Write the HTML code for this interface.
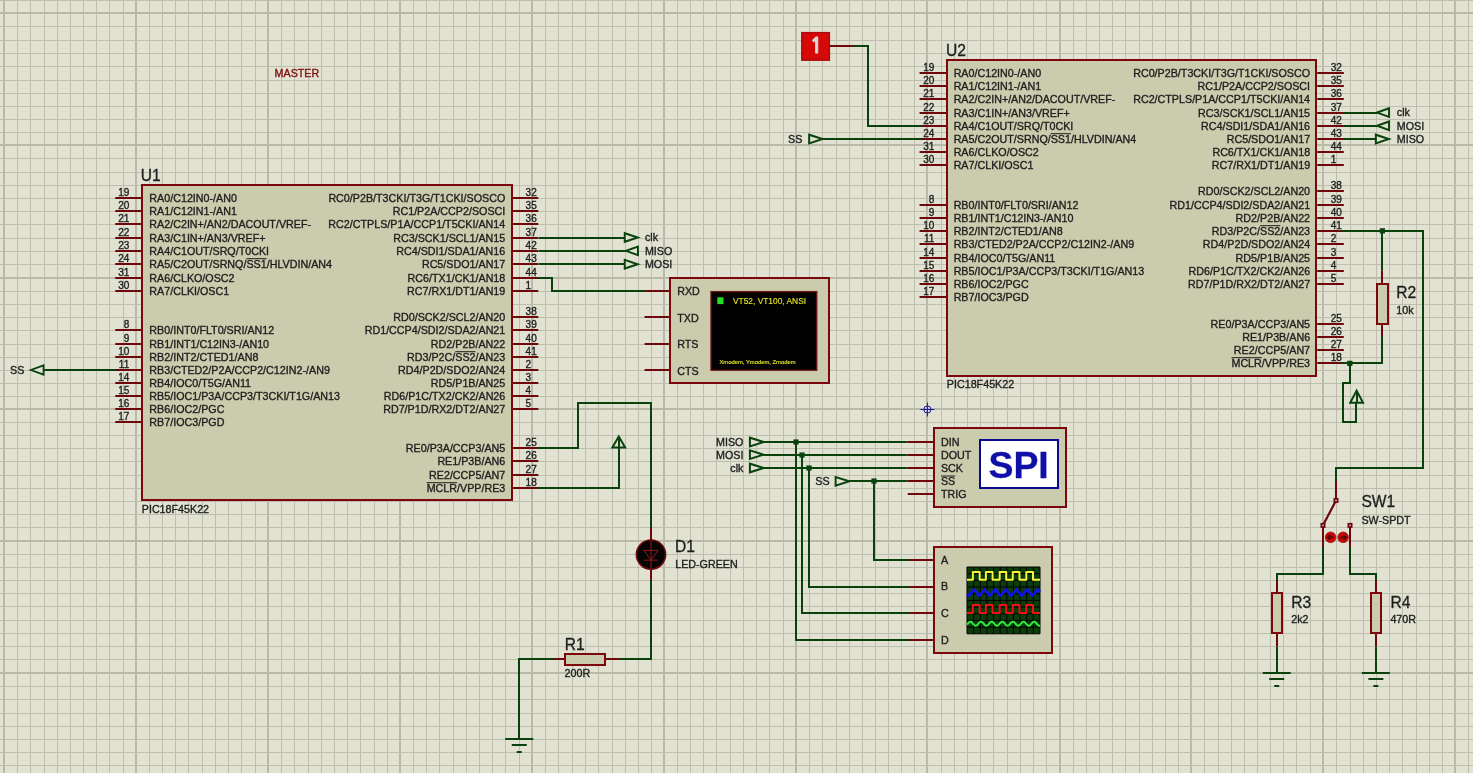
<!DOCTYPE html>
<html><head><meta charset="utf-8"><title>SPI Master/Slave schematic</title>
<style>html,body{margin:0;padding:0;background:#e1e2d2;overflow:hidden}svg{display:block;will-change:transform;opacity:0.999}text{white-space:pre}</style>
</head><body>
<svg width="1473" height="773" viewBox="0 0 1473 773" font-family='"Liberation Sans", Arial, sans-serif'><rect x="0" y="0" width="1473" height="773" fill="#e1e2d2"/>
<g shape-rendering="crispEdges"><rect x="3" y="0" width="2" height="773" fill="#b8b9a8"/><rect x="17" y="0" width="1" height="773" fill="#bdbead"/><rect x="30" y="0" width="1" height="773" fill="#bdbead"/><rect x="44" y="0" width="1" height="773" fill="#bdbead"/><rect x="57" y="0" width="1" height="773" fill="#bdbead"/><rect x="70" y="0" width="1" height="773" fill="#bdbead"/><rect x="83" y="0" width="1" height="773" fill="#bdbead"/><rect x="96" y="0" width="1" height="773" fill="#bdbead"/><rect x="109" y="0" width="1" height="773" fill="#bdbead"/><rect x="123" y="0" width="1" height="773" fill="#bdbead"/><rect x="135" y="0" width="2" height="773" fill="#b8b9a8"/><rect x="149" y="0" width="1" height="773" fill="#bdbead"/><rect x="162" y="0" width="1" height="773" fill="#bdbead"/><rect x="175" y="0" width="1" height="773" fill="#bdbead"/><rect x="188" y="0" width="1" height="773" fill="#bdbead"/><rect x="202" y="0" width="1" height="773" fill="#bdbead"/><rect x="215" y="0" width="1" height="773" fill="#bdbead"/><rect x="228" y="0" width="1" height="773" fill="#bdbead"/><rect x="241" y="0" width="1" height="773" fill="#bdbead"/><rect x="255" y="0" width="1" height="773" fill="#bdbead"/><rect x="267" y="0" width="2" height="773" fill="#b8b9a8"/><rect x="281" y="0" width="1" height="773" fill="#bdbead"/><rect x="294" y="0" width="1" height="773" fill="#bdbead"/><rect x="308" y="0" width="1" height="773" fill="#bdbead"/><rect x="321" y="0" width="1" height="773" fill="#bdbead"/><rect x="334" y="0" width="1" height="773" fill="#bdbead"/><rect x="347" y="0" width="1" height="773" fill="#bdbead"/><rect x="360" y="0" width="1" height="773" fill="#bdbead"/><rect x="374" y="0" width="1" height="773" fill="#bdbead"/><rect x="387" y="0" width="1" height="773" fill="#bdbead"/><rect x="399" y="0" width="2" height="773" fill="#b8b9a8"/><rect x="413" y="0" width="1" height="773" fill="#bdbead"/><rect x="426" y="0" width="1" height="773" fill="#bdbead"/><rect x="439" y="0" width="1" height="773" fill="#bdbead"/><rect x="453" y="0" width="1" height="773" fill="#bdbead"/><rect x="466" y="0" width="1" height="773" fill="#bdbead"/><rect x="479" y="0" width="1" height="773" fill="#bdbead"/><rect x="492" y="0" width="1" height="773" fill="#bdbead"/><rect x="505" y="0" width="1" height="773" fill="#bdbead"/><rect x="519" y="0" width="1" height="773" fill="#bdbead"/><rect x="531" y="0" width="2" height="773" fill="#b8b9a8"/><rect x="545" y="0" width="1" height="773" fill="#bdbead"/><rect x="558" y="0" width="1" height="773" fill="#bdbead"/><rect x="572" y="0" width="1" height="773" fill="#bdbead"/><rect x="585" y="0" width="1" height="773" fill="#bdbead"/><rect x="598" y="0" width="1" height="773" fill="#bdbead"/><rect x="612" y="0" width="1" height="773" fill="#bdbead"/><rect x="625" y="0" width="1" height="773" fill="#bdbead"/><rect x="638" y="0" width="1" height="773" fill="#bdbead"/><rect x="651" y="0" width="1" height="773" fill="#bdbead"/><rect x="663" y="0" width="2" height="773" fill="#b8b9a8"/><rect x="677" y="0" width="1" height="773" fill="#bdbead"/><rect x="690" y="0" width="1" height="773" fill="#bdbead"/><rect x="703" y="0" width="1" height="773" fill="#bdbead"/><rect x="716" y="0" width="1" height="773" fill="#bdbead"/><rect x="730" y="0" width="1" height="773" fill="#bdbead"/><rect x="743" y="0" width="1" height="773" fill="#bdbead"/><rect x="756" y="0" width="1" height="773" fill="#bdbead"/><rect x="769" y="0" width="1" height="773" fill="#bdbead"/><rect x="783" y="0" width="1" height="773" fill="#bdbead"/><rect x="795" y="0" width="2" height="773" fill="#b8b9a8"/><rect x="809" y="0" width="1" height="773" fill="#bdbead"/><rect x="822" y="0" width="1" height="773" fill="#bdbead"/><rect x="836" y="0" width="1" height="773" fill="#bdbead"/><rect x="849" y="0" width="1" height="773" fill="#bdbead"/><rect x="862" y="0" width="1" height="773" fill="#bdbead"/><rect x="875" y="0" width="1" height="773" fill="#bdbead"/><rect x="888" y="0" width="1" height="773" fill="#bdbead"/><rect x="901" y="0" width="1" height="773" fill="#bdbead"/><rect x="914" y="0" width="1" height="773" fill="#bdbead"/><rect x="926" y="0" width="2" height="773" fill="#b8b9a8"/><rect x="941" y="0" width="1" height="773" fill="#bdbead"/><rect x="954" y="0" width="1" height="773" fill="#bdbead"/><rect x="967" y="0" width="1" height="773" fill="#bdbead"/><rect x="980" y="0" width="1" height="773" fill="#bdbead"/><rect x="993" y="0" width="1" height="773" fill="#bdbead"/><rect x="1007" y="0" width="1" height="773" fill="#bdbead"/><rect x="1020" y="0" width="1" height="773" fill="#bdbead"/><rect x="1033" y="0" width="1" height="773" fill="#bdbead"/><rect x="1046" y="0" width="1" height="773" fill="#bdbead"/><rect x="1059" y="0" width="2" height="773" fill="#b8b9a8"/><rect x="1073" y="0" width="1" height="773" fill="#bdbead"/><rect x="1086" y="0" width="1" height="773" fill="#bdbead"/><rect x="1099" y="0" width="1" height="773" fill="#bdbead"/><rect x="1112" y="0" width="1" height="773" fill="#bdbead"/><rect x="1125" y="0" width="1" height="773" fill="#bdbead"/><rect x="1139" y="0" width="1" height="773" fill="#bdbead"/><rect x="1152" y="0" width="1" height="773" fill="#bdbead"/><rect x="1165" y="0" width="1" height="773" fill="#bdbead"/><rect x="1178" y="0" width="1" height="773" fill="#bdbead"/><rect x="1190" y="0" width="2" height="773" fill="#b8b9a8"/><rect x="1204" y="0" width="1" height="773" fill="#bdbead"/><rect x="1218" y="0" width="1" height="773" fill="#bdbead"/><rect x="1231" y="0" width="1" height="773" fill="#bdbead"/><rect x="1244" y="0" width="1" height="773" fill="#bdbead"/><rect x="1257" y="0" width="1" height="773" fill="#bdbead"/><rect x="1270" y="0" width="1" height="773" fill="#bdbead"/><rect x="1283" y="0" width="1" height="773" fill="#bdbead"/><rect x="1296" y="0" width="1" height="773" fill="#bdbead"/><rect x="1310" y="0" width="1" height="773" fill="#bdbead"/><rect x="1322" y="0" width="2" height="773" fill="#b8b9a8"/><rect x="1336" y="0" width="1" height="773" fill="#bdbead"/><rect x="1350" y="0" width="1" height="773" fill="#bdbead"/><rect x="1363" y="0" width="1" height="773" fill="#bdbead"/><rect x="1376" y="0" width="1" height="773" fill="#bdbead"/><rect x="1389" y="0" width="1" height="773" fill="#bdbead"/><rect x="1402" y="0" width="1" height="773" fill="#bdbead"/><rect x="1416" y="0" width="1" height="773" fill="#bdbead"/><rect x="1429" y="0" width="1" height="773" fill="#bdbead"/><rect x="1442" y="0" width="1" height="773" fill="#bdbead"/><rect x="1454" y="0" width="2" height="773" fill="#b8b9a8"/><rect x="1468" y="0" width="1" height="773" fill="#bdbead"/><rect x="0" y="0" width="1473" height="1" fill="#bdbead"/><rect x="0" y="12" width="1473" height="2" fill="#b8b9a8"/><rect x="0" y="26" width="1473" height="1" fill="#bdbead"/><rect x="0" y="40" width="1473" height="1" fill="#bdbead"/><rect x="0" y="53" width="1473" height="1" fill="#bdbead"/><rect x="0" y="66" width="1473" height="1" fill="#bdbead"/><rect x="0" y="80" width="1473" height="1" fill="#bdbead"/><rect x="0" y="93" width="1473" height="1" fill="#bdbead"/><rect x="0" y="106" width="1473" height="1" fill="#bdbead"/><rect x="0" y="119" width="1473" height="1" fill="#bdbead"/><rect x="0" y="132" width="1473" height="1" fill="#bdbead"/><rect x="0" y="144" width="1473" height="2" fill="#b8b9a8"/><rect x="0" y="158" width="1473" height="1" fill="#bdbead"/><rect x="0" y="172" width="1473" height="1" fill="#bdbead"/><rect x="0" y="185" width="1473" height="1" fill="#bdbead"/><rect x="0" y="198" width="1473" height="1" fill="#bdbead"/><rect x="0" y="211" width="1473" height="1" fill="#bdbead"/><rect x="0" y="224" width="1473" height="1" fill="#bdbead"/><rect x="0" y="238" width="1473" height="1" fill="#bdbead"/><rect x="0" y="251" width="1473" height="1" fill="#bdbead"/><rect x="0" y="264" width="1473" height="1" fill="#bdbead"/><rect x="0" y="277" width="1473" height="2" fill="#b8b9a8"/><rect x="0" y="291" width="1473" height="1" fill="#bdbead"/><rect x="0" y="304" width="1473" height="1" fill="#bdbead"/><rect x="0" y="317" width="1473" height="1" fill="#bdbead"/><rect x="0" y="330" width="1473" height="1" fill="#bdbead"/><rect x="0" y="344" width="1473" height="1" fill="#bdbead"/><rect x="0" y="357" width="1473" height="1" fill="#bdbead"/><rect x="0" y="370" width="1473" height="1" fill="#bdbead"/><rect x="0" y="383" width="1473" height="1" fill="#bdbead"/><rect x="0" y="396" width="1473" height="1" fill="#bdbead"/><rect x="0" y="408" width="1473" height="2" fill="#b8b9a8"/><rect x="0" y="422" width="1473" height="1" fill="#bdbead"/><rect x="0" y="435" width="1473" height="1" fill="#bdbead"/><rect x="0" y="448" width="1473" height="1" fill="#bdbead"/><rect x="0" y="461" width="1473" height="1" fill="#bdbead"/><rect x="0" y="475" width="1473" height="1" fill="#bdbead"/><rect x="0" y="488" width="1473" height="1" fill="#bdbead"/><rect x="0" y="501" width="1473" height="1" fill="#bdbead"/><rect x="0" y="514" width="1473" height="1" fill="#bdbead"/><rect x="0" y="527" width="1473" height="1" fill="#bdbead"/><rect x="0" y="540" width="1473" height="2" fill="#b8b9a8"/><rect x="0" y="554" width="1473" height="1" fill="#bdbead"/><rect x="0" y="567" width="1473" height="1" fill="#bdbead"/><rect x="0" y="580" width="1473" height="1" fill="#bdbead"/><rect x="0" y="593" width="1473" height="1" fill="#bdbead"/><rect x="0" y="606" width="1473" height="1" fill="#bdbead"/><rect x="0" y="620" width="1473" height="1" fill="#bdbead"/><rect x="0" y="633" width="1473" height="1" fill="#bdbead"/><rect x="0" y="646" width="1473" height="1" fill="#bdbead"/><rect x="0" y="659" width="1473" height="1" fill="#bdbead"/><rect x="0" y="672" width="1473" height="2" fill="#b8b9a8"/><rect x="0" y="686" width="1473" height="1" fill="#bdbead"/><rect x="0" y="699" width="1473" height="1" fill="#bdbead"/><rect x="0" y="713" width="1473" height="1" fill="#bdbead"/><rect x="0" y="726" width="1473" height="1" fill="#bdbead"/><rect x="0" y="739" width="1473" height="1" fill="#bdbead"/><rect x="0" y="752" width="1473" height="1" fill="#bdbead"/><rect x="0" y="765" width="1473" height="1" fill="#bdbead"/></g>
<rect x="142" y="185" width="370" height="315" fill="#cbcbae" stroke="#7c060c" stroke-width="2"/>
<text x="140.85" y="181" font-size="15.6" text-anchor="start" fill="#1e1e1e" stroke="#1e1e1e" stroke-width="0.3">U1</text>
<text x="141.75" y="512.54" font-size="10.72" text-anchor="start" fill="#1e1e1e" stroke="#1e1e1e" stroke-width="0.35">PIC18F45K22</text>
<line x1="115.25" y1="198" x2="141.05" y2="198" stroke="#6e060c" stroke-width="2" stroke-linecap="butt"/>
<text x="129.25" y="195.8" font-size="10.0" text-anchor="end" fill="#1e1e1e" stroke="#1e1e1e" stroke-width="0.35">19</text>
<text x="149.35" y="201.9" font-size="10.72" text-anchor="start" fill="#1e1e1e" stroke="#1e1e1e" stroke-width="0.35">RA0/C12IN0-/AN0</text>
<line x1="115.25" y1="211" x2="141.05" y2="211" stroke="#6e060c" stroke-width="2" stroke-linecap="butt"/>
<text x="129.25" y="208.8" font-size="10.0" text-anchor="end" fill="#1e1e1e" stroke="#1e1e1e" stroke-width="0.35">20</text>
<text x="149.35" y="214.9" font-size="10.72" text-anchor="start" fill="#1e1e1e" stroke="#1e1e1e" stroke-width="0.35">RA1/C12IN1-/AN1</text>
<line x1="115.25" y1="224" x2="141.05" y2="224" stroke="#6e060c" stroke-width="2" stroke-linecap="butt"/>
<text x="129.25" y="221.8" font-size="10.0" text-anchor="end" fill="#1e1e1e" stroke="#1e1e1e" stroke-width="0.35">21</text>
<text x="149.35" y="227.9" font-size="10.72" text-anchor="start" fill="#1e1e1e" stroke="#1e1e1e" stroke-width="0.35">RA2/C2IN+/AN2/DACOUT/VREF-</text>
<line x1="115.25" y1="238" x2="141.05" y2="238" stroke="#6e060c" stroke-width="2" stroke-linecap="butt"/>
<text x="129.25" y="235.8" font-size="10.0" text-anchor="end" fill="#1e1e1e" stroke="#1e1e1e" stroke-width="0.35">22</text>
<text x="149.35" y="241.9" font-size="10.72" text-anchor="start" fill="#1e1e1e" stroke="#1e1e1e" stroke-width="0.35">RA3/C1IN+/AN3/VREF+</text>
<line x1="115.25" y1="251" x2="141.05" y2="251" stroke="#6e060c" stroke-width="2" stroke-linecap="butt"/>
<text x="129.25" y="248.8" font-size="10.0" text-anchor="end" fill="#1e1e1e" stroke="#1e1e1e" stroke-width="0.35">23</text>
<text x="149.35" y="254.9" font-size="10.72" text-anchor="start" fill="#1e1e1e" stroke="#1e1e1e" stroke-width="0.35">RA4/C1OUT/SRQ/T0CKI</text>
<line x1="115.25" y1="264" x2="141.05" y2="264" stroke="#6e060c" stroke-width="2" stroke-linecap="butt"/>
<text x="129.25" y="261.8" font-size="10.0" text-anchor="end" fill="#1e1e1e" stroke="#1e1e1e" stroke-width="0.35">24</text>
<text x="149.35" y="267.9" font-size="10.72" text-anchor="start" fill="#1e1e1e" stroke="#1e1e1e" stroke-width="0.35">RA5/C2OUT/SRNQ/SS1/HLVDIN/AN4</text>
<line x1="115.25" y1="278" x2="141.05" y2="278" stroke="#6e060c" stroke-width="2" stroke-linecap="butt"/>
<text x="129.25" y="275.8" font-size="10.0" text-anchor="end" fill="#1e1e1e" stroke="#1e1e1e" stroke-width="0.35">31</text>
<text x="149.35" y="281.9" font-size="10.72" text-anchor="start" fill="#1e1e1e" stroke="#1e1e1e" stroke-width="0.35">RA6/CLKO/OSC2</text>
<line x1="115.25" y1="291" x2="141.05" y2="291" stroke="#6e060c" stroke-width="2" stroke-linecap="butt"/>
<text x="129.25" y="288.8" font-size="10.0" text-anchor="end" fill="#1e1e1e" stroke="#1e1e1e" stroke-width="0.35">30</text>
<text x="149.35" y="294.9" font-size="10.72" text-anchor="start" fill="#1e1e1e" stroke="#1e1e1e" stroke-width="0.35">RA7/CLKI/OSC1</text>
<line x1="115.25" y1="330" x2="141.05" y2="330" stroke="#6e060c" stroke-width="2" stroke-linecap="butt"/>
<text x="129.25" y="327.8" font-size="10.0" text-anchor="end" fill="#1e1e1e" stroke="#1e1e1e" stroke-width="0.35">8</text>
<text x="149.35" y="333.9" font-size="10.72" text-anchor="start" fill="#1e1e1e" stroke="#1e1e1e" stroke-width="0.35">RB0/INT0/FLT0/SRI/AN12</text>
<line x1="115.25" y1="344" x2="141.05" y2="344" stroke="#6e060c" stroke-width="2" stroke-linecap="butt"/>
<text x="129.25" y="341.8" font-size="10.0" text-anchor="end" fill="#1e1e1e" stroke="#1e1e1e" stroke-width="0.35">9</text>
<text x="149.35" y="347.9" font-size="10.72" text-anchor="start" fill="#1e1e1e" stroke="#1e1e1e" stroke-width="0.35">RB1/INT1/C12IN3-/AN10</text>
<line x1="115.25" y1="357" x2="141.05" y2="357" stroke="#6e060c" stroke-width="2" stroke-linecap="butt"/>
<text x="129.25" y="354.8" font-size="10.0" text-anchor="end" fill="#1e1e1e" stroke="#1e1e1e" stroke-width="0.35">10</text>
<text x="149.35" y="360.9" font-size="10.72" text-anchor="start" fill="#1e1e1e" stroke="#1e1e1e" stroke-width="0.35">RB2/INT2/CTED1/AN8</text>
<line x1="115.25" y1="370" x2="141.05" y2="370" stroke="#6e060c" stroke-width="2" stroke-linecap="butt"/>
<text x="129.25" y="367.8" font-size="10.0" text-anchor="end" fill="#1e1e1e" stroke="#1e1e1e" stroke-width="0.35">11</text>
<text x="149.35" y="373.9" font-size="10.72" text-anchor="start" fill="#1e1e1e" stroke="#1e1e1e" stroke-width="0.35">RB3/CTED2/P2A/CCP2/C12IN2-/AN9</text>
<line x1="115.25" y1="383" x2="141.05" y2="383" stroke="#6e060c" stroke-width="2" stroke-linecap="butt"/>
<text x="129.25" y="380.8" font-size="10.0" text-anchor="end" fill="#1e1e1e" stroke="#1e1e1e" stroke-width="0.35">14</text>
<text x="149.35" y="386.9" font-size="10.72" text-anchor="start" fill="#1e1e1e" stroke="#1e1e1e" stroke-width="0.35">RB4/IOC0/T5G/AN11</text>
<line x1="115.25" y1="396" x2="141.05" y2="396" stroke="#6e060c" stroke-width="2" stroke-linecap="butt"/>
<text x="129.25" y="393.8" font-size="10.0" text-anchor="end" fill="#1e1e1e" stroke="#1e1e1e" stroke-width="0.35">15</text>
<text x="149.35" y="399.9" font-size="10.72" text-anchor="start" fill="#1e1e1e" stroke="#1e1e1e" stroke-width="0.35">RB5/IOC1/P3A/CCP3/T3CKI/T1G/AN13</text>
<line x1="115.25" y1="409" x2="141.05" y2="409" stroke="#6e060c" stroke-width="2" stroke-linecap="butt"/>
<text x="129.25" y="406.8" font-size="10.0" text-anchor="end" fill="#1e1e1e" stroke="#1e1e1e" stroke-width="0.35">16</text>
<text x="149.35" y="412.9" font-size="10.72" text-anchor="start" fill="#1e1e1e" stroke="#1e1e1e" stroke-width="0.35">RB6/IOC2/PGC</text>
<line x1="115.25" y1="422" x2="141.05" y2="422" stroke="#6e060c" stroke-width="2" stroke-linecap="butt"/>
<text x="129.25" y="419.8" font-size="10.0" text-anchor="end" fill="#1e1e1e" stroke="#1e1e1e" stroke-width="0.35">17</text>
<text x="149.35" y="425.9" font-size="10.72" text-anchor="start" fill="#1e1e1e" stroke="#1e1e1e" stroke-width="0.35">RB7/IOC3/PGD</text>
<line x1="513.01" y1="198" x2="538.31" y2="198" stroke="#6e060c" stroke-width="2" stroke-linecap="butt"/>
<text x="525.61" y="195.8" font-size="10.0" text-anchor="start" fill="#1e1e1e" stroke="#1e1e1e" stroke-width="0.35">32</text>
<text x="505.31" y="201.9" font-size="10.72" text-anchor="end" fill="#1e1e1e" stroke="#1e1e1e" stroke-width="0.35">RC0/P2B/T3CKI/T3G/T1CKI/SOSCO</text>
<line x1="513.01" y1="211" x2="538.31" y2="211" stroke="#6e060c" stroke-width="2" stroke-linecap="butt"/>
<text x="525.61" y="208.8" font-size="10.0" text-anchor="start" fill="#1e1e1e" stroke="#1e1e1e" stroke-width="0.35">35</text>
<text x="505.31" y="214.9" font-size="10.72" text-anchor="end" fill="#1e1e1e" stroke="#1e1e1e" stroke-width="0.35">RC1/P2A/CCP2/SOSCI</text>
<line x1="513.01" y1="224" x2="538.31" y2="224" stroke="#6e060c" stroke-width="2" stroke-linecap="butt"/>
<text x="525.61" y="221.8" font-size="10.0" text-anchor="start" fill="#1e1e1e" stroke="#1e1e1e" stroke-width="0.35">36</text>
<text x="505.31" y="227.9" font-size="10.72" text-anchor="end" fill="#1e1e1e" stroke="#1e1e1e" stroke-width="0.35">RC2/CTPLS/P1A/CCP1/T5CKI/AN14</text>
<line x1="513.01" y1="238" x2="538.31" y2="238" stroke="#6e060c" stroke-width="2" stroke-linecap="butt"/>
<text x="525.61" y="235.8" font-size="10.0" text-anchor="start" fill="#1e1e1e" stroke="#1e1e1e" stroke-width="0.35">37</text>
<text x="505.31" y="241.9" font-size="10.72" text-anchor="end" fill="#1e1e1e" stroke="#1e1e1e" stroke-width="0.35">RC3/SCK1/SCL1/AN15</text>
<line x1="513.01" y1="251" x2="538.31" y2="251" stroke="#6e060c" stroke-width="2" stroke-linecap="butt"/>
<text x="525.61" y="248.8" font-size="10.0" text-anchor="start" fill="#1e1e1e" stroke="#1e1e1e" stroke-width="0.35">42</text>
<text x="505.31" y="254.9" font-size="10.72" text-anchor="end" fill="#1e1e1e" stroke="#1e1e1e" stroke-width="0.35">RC4/SDI1/SDA1/AN16</text>
<line x1="513.01" y1="264" x2="538.31" y2="264" stroke="#6e060c" stroke-width="2" stroke-linecap="butt"/>
<text x="525.61" y="261.8" font-size="10.0" text-anchor="start" fill="#1e1e1e" stroke="#1e1e1e" stroke-width="0.35">43</text>
<text x="505.31" y="267.9" font-size="10.72" text-anchor="end" fill="#1e1e1e" stroke="#1e1e1e" stroke-width="0.35">RC5/SDO1/AN17</text>
<line x1="513.01" y1="278" x2="538.31" y2="278" stroke="#6e060c" stroke-width="2" stroke-linecap="butt"/>
<text x="525.61" y="275.8" font-size="10.0" text-anchor="start" fill="#1e1e1e" stroke="#1e1e1e" stroke-width="0.35">44</text>
<text x="505.31" y="281.9" font-size="10.72" text-anchor="end" fill="#1e1e1e" stroke="#1e1e1e" stroke-width="0.35">RC6/TX1/CK1/AN18</text>
<line x1="513.01" y1="291" x2="538.31" y2="291" stroke="#6e060c" stroke-width="2" stroke-linecap="butt"/>
<text x="525.61" y="288.8" font-size="10.0" text-anchor="start" fill="#1e1e1e" stroke="#1e1e1e" stroke-width="0.35">1</text>
<text x="505.31" y="294.9" font-size="10.72" text-anchor="end" fill="#1e1e1e" stroke="#1e1e1e" stroke-width="0.35">RC7/RX1/DT1/AN19</text>
<line x1="513.01" y1="317" x2="538.31" y2="317" stroke="#6e060c" stroke-width="2" stroke-linecap="butt"/>
<text x="525.61" y="314.8" font-size="10.0" text-anchor="start" fill="#1e1e1e" stroke="#1e1e1e" stroke-width="0.35">38</text>
<text x="505.31" y="320.9" font-size="10.72" text-anchor="end" fill="#1e1e1e" stroke="#1e1e1e" stroke-width="0.35">RD0/SCK2/SCL2/AN20</text>
<line x1="513.01" y1="330" x2="538.31" y2="330" stroke="#6e060c" stroke-width="2" stroke-linecap="butt"/>
<text x="525.61" y="327.8" font-size="10.0" text-anchor="start" fill="#1e1e1e" stroke="#1e1e1e" stroke-width="0.35">39</text>
<text x="505.31" y="333.9" font-size="10.72" text-anchor="end" fill="#1e1e1e" stroke="#1e1e1e" stroke-width="0.35">RD1/CCP4/SDI2/SDA2/AN21</text>
<line x1="513.01" y1="344" x2="538.31" y2="344" stroke="#6e060c" stroke-width="2" stroke-linecap="butt"/>
<text x="525.61" y="341.8" font-size="10.0" text-anchor="start" fill="#1e1e1e" stroke="#1e1e1e" stroke-width="0.35">40</text>
<text x="505.31" y="347.9" font-size="10.72" text-anchor="end" fill="#1e1e1e" stroke="#1e1e1e" stroke-width="0.35">RD2/P2B/AN22</text>
<line x1="513.01" y1="357" x2="538.31" y2="357" stroke="#6e060c" stroke-width="2" stroke-linecap="butt"/>
<text x="525.61" y="354.8" font-size="10.0" text-anchor="start" fill="#1e1e1e" stroke="#1e1e1e" stroke-width="0.35">41</text>
<text x="505.31" y="360.9" font-size="10.72" text-anchor="end" fill="#1e1e1e" stroke="#1e1e1e" stroke-width="0.35">RD3/P2C/SS2/AN23</text>
<line x1="513.01" y1="370" x2="538.31" y2="370" stroke="#6e060c" stroke-width="2" stroke-linecap="butt"/>
<text x="525.61" y="367.8" font-size="10.0" text-anchor="start" fill="#1e1e1e" stroke="#1e1e1e" stroke-width="0.35">2</text>
<text x="505.31" y="373.9" font-size="10.72" text-anchor="end" fill="#1e1e1e" stroke="#1e1e1e" stroke-width="0.35">RD4/P2D/SDO2/AN24</text>
<line x1="513.01" y1="383" x2="538.31" y2="383" stroke="#6e060c" stroke-width="2" stroke-linecap="butt"/>
<text x="525.61" y="380.8" font-size="10.0" text-anchor="start" fill="#1e1e1e" stroke="#1e1e1e" stroke-width="0.35">3</text>
<text x="505.31" y="386.9" font-size="10.72" text-anchor="end" fill="#1e1e1e" stroke="#1e1e1e" stroke-width="0.35">RD5/P1B/AN25</text>
<line x1="513.01" y1="396" x2="538.31" y2="396" stroke="#6e060c" stroke-width="2" stroke-linecap="butt"/>
<text x="525.61" y="393.8" font-size="10.0" text-anchor="start" fill="#1e1e1e" stroke="#1e1e1e" stroke-width="0.35">4</text>
<text x="505.31" y="399.9" font-size="10.72" text-anchor="end" fill="#1e1e1e" stroke="#1e1e1e" stroke-width="0.35">RD6/P1C/TX2/CK2/AN26</text>
<line x1="513.01" y1="409" x2="538.31" y2="409" stroke="#6e060c" stroke-width="2" stroke-linecap="butt"/>
<text x="525.61" y="406.8" font-size="10.0" text-anchor="start" fill="#1e1e1e" stroke="#1e1e1e" stroke-width="0.35">5</text>
<text x="505.31" y="412.9" font-size="10.72" text-anchor="end" fill="#1e1e1e" stroke="#1e1e1e" stroke-width="0.35">RD7/P1D/RX2/DT2/AN27</text>
<line x1="513.01" y1="448" x2="538.31" y2="448" stroke="#6e060c" stroke-width="2" stroke-linecap="butt"/>
<text x="525.61" y="445.8" font-size="10.0" text-anchor="start" fill="#1e1e1e" stroke="#1e1e1e" stroke-width="0.35">25</text>
<text x="505.31" y="451.9" font-size="10.72" text-anchor="end" fill="#1e1e1e" stroke="#1e1e1e" stroke-width="0.35">RE0/P3A/CCP3/AN5</text>
<line x1="513.01" y1="461" x2="538.31" y2="461" stroke="#6e060c" stroke-width="2" stroke-linecap="butt"/>
<text x="525.61" y="458.8" font-size="10.0" text-anchor="start" fill="#1e1e1e" stroke="#1e1e1e" stroke-width="0.35">26</text>
<text x="505.31" y="464.9" font-size="10.72" text-anchor="end" fill="#1e1e1e" stroke="#1e1e1e" stroke-width="0.35">RE1/P3B/AN6</text>
<line x1="513.01" y1="475" x2="538.31" y2="475" stroke="#6e060c" stroke-width="2" stroke-linecap="butt"/>
<text x="525.61" y="472.8" font-size="10.0" text-anchor="start" fill="#1e1e1e" stroke="#1e1e1e" stroke-width="0.35">27</text>
<text x="505.31" y="478.9" font-size="10.72" text-anchor="end" fill="#1e1e1e" stroke="#1e1e1e" stroke-width="0.35">RE2/CCP5/AN7</text>
<line x1="513.01" y1="488" x2="538.31" y2="488" stroke="#6e060c" stroke-width="2" stroke-linecap="butt"/>
<text x="525.61" y="485.8" font-size="10.0" text-anchor="start" fill="#1e1e1e" stroke="#1e1e1e" stroke-width="0.35">18</text>
<text x="505.31" y="491.9" font-size="10.72" text-anchor="end" fill="#1e1e1e" stroke="#1e1e1e" stroke-width="0.35">MCLR/VPP/RE3</text>
<rect x="947" y="60" width="369" height="316" fill="#cbcbae" stroke="#7c060c" stroke-width="2"/>
<text x="945.94" y="56" font-size="15.6" text-anchor="start" fill="#1e1e1e" stroke="#1e1e1e" stroke-width="0.3">U2</text>
<text x="946.84" y="388.35" font-size="10.72" text-anchor="start" fill="#1e1e1e" stroke="#1e1e1e" stroke-width="0.35">PIC18F45K22</text>
<line x1="919.54" y1="73" x2="946.14" y2="73" stroke="#6e060c" stroke-width="2" stroke-linecap="butt"/>
<text x="934.34" y="70.8" font-size="10.0" text-anchor="end" fill="#1e1e1e" stroke="#1e1e1e" stroke-width="0.35">19</text>
<text x="953.64" y="76.9" font-size="10.72" text-anchor="start" fill="#1e1e1e" stroke="#1e1e1e" stroke-width="0.35">RA0/C12IN0-/AN0</text>
<line x1="919.54" y1="86" x2="946.14" y2="86" stroke="#6e060c" stroke-width="2" stroke-linecap="butt"/>
<text x="934.34" y="83.8" font-size="10.0" text-anchor="end" fill="#1e1e1e" stroke="#1e1e1e" stroke-width="0.35">20</text>
<text x="953.64" y="89.9" font-size="10.72" text-anchor="start" fill="#1e1e1e" stroke="#1e1e1e" stroke-width="0.35">RA1/C12IN1-/AN1</text>
<line x1="919.54" y1="99" x2="946.14" y2="99" stroke="#6e060c" stroke-width="2" stroke-linecap="butt"/>
<text x="934.34" y="96.8" font-size="10.0" text-anchor="end" fill="#1e1e1e" stroke="#1e1e1e" stroke-width="0.35">21</text>
<text x="953.64" y="102.9" font-size="10.72" text-anchor="start" fill="#1e1e1e" stroke="#1e1e1e" stroke-width="0.35">RA2/C2IN+/AN2/DACOUT/VREF-</text>
<line x1="919.54" y1="113" x2="946.14" y2="113" stroke="#6e060c" stroke-width="2" stroke-linecap="butt"/>
<text x="934.34" y="110.8" font-size="10.0" text-anchor="end" fill="#1e1e1e" stroke="#1e1e1e" stroke-width="0.35">22</text>
<text x="953.64" y="116.9" font-size="10.72" text-anchor="start" fill="#1e1e1e" stroke="#1e1e1e" stroke-width="0.35">RA3/C1IN+/AN3/VREF+</text>
<line x1="919.54" y1="126" x2="946.14" y2="126" stroke="#6e060c" stroke-width="2" stroke-linecap="butt"/>
<text x="934.34" y="123.8" font-size="10.0" text-anchor="end" fill="#1e1e1e" stroke="#1e1e1e" stroke-width="0.35">23</text>
<text x="953.64" y="129.9" font-size="10.72" text-anchor="start" fill="#1e1e1e" stroke="#1e1e1e" stroke-width="0.35">RA4/C1OUT/SRQ/T0CKI</text>
<line x1="919.54" y1="139" x2="946.14" y2="139" stroke="#6e060c" stroke-width="2" stroke-linecap="butt"/>
<text x="934.34" y="136.8" font-size="10.0" text-anchor="end" fill="#1e1e1e" stroke="#1e1e1e" stroke-width="0.35">24</text>
<text x="953.64" y="142.9" font-size="10.72" text-anchor="start" fill="#1e1e1e" stroke="#1e1e1e" stroke-width="0.35">RA5/C2OUT/SRNQ/SS1/HLVDIN/AN4</text>
<line x1="919.54" y1="152" x2="946.14" y2="152" stroke="#6e060c" stroke-width="2" stroke-linecap="butt"/>
<text x="934.34" y="149.8" font-size="10.0" text-anchor="end" fill="#1e1e1e" stroke="#1e1e1e" stroke-width="0.35">31</text>
<text x="953.64" y="155.9" font-size="10.72" text-anchor="start" fill="#1e1e1e" stroke="#1e1e1e" stroke-width="0.35">RA6/CLKO/OSC2</text>
<line x1="919.54" y1="165" x2="946.14" y2="165" stroke="#6e060c" stroke-width="2" stroke-linecap="butt"/>
<text x="934.34" y="162.8" font-size="10.0" text-anchor="end" fill="#1e1e1e" stroke="#1e1e1e" stroke-width="0.35">30</text>
<text x="953.64" y="168.9" font-size="10.72" text-anchor="start" fill="#1e1e1e" stroke="#1e1e1e" stroke-width="0.35">RA7/CLKI/OSC1</text>
<line x1="919.54" y1="205" x2="946.14" y2="205" stroke="#6e060c" stroke-width="2" stroke-linecap="butt"/>
<text x="934.34" y="202.8" font-size="10.0" text-anchor="end" fill="#1e1e1e" stroke="#1e1e1e" stroke-width="0.35">8</text>
<text x="953.64" y="208.9" font-size="10.72" text-anchor="start" fill="#1e1e1e" stroke="#1e1e1e" stroke-width="0.35">RB0/INT0/FLT0/SRI/AN12</text>
<line x1="919.54" y1="218" x2="946.14" y2="218" stroke="#6e060c" stroke-width="2" stroke-linecap="butt"/>
<text x="934.34" y="215.8" font-size="10.0" text-anchor="end" fill="#1e1e1e" stroke="#1e1e1e" stroke-width="0.35">9</text>
<text x="953.64" y="221.9" font-size="10.72" text-anchor="start" fill="#1e1e1e" stroke="#1e1e1e" stroke-width="0.35">RB1/INT1/C12IN3-/AN10</text>
<line x1="919.54" y1="231" x2="946.14" y2="231" stroke="#6e060c" stroke-width="2" stroke-linecap="butt"/>
<text x="934.34" y="228.8" font-size="10.0" text-anchor="end" fill="#1e1e1e" stroke="#1e1e1e" stroke-width="0.35">10</text>
<text x="953.64" y="234.9" font-size="10.72" text-anchor="start" fill="#1e1e1e" stroke="#1e1e1e" stroke-width="0.35">RB2/INT2/CTED1/AN8</text>
<line x1="919.54" y1="244" x2="946.14" y2="244" stroke="#6e060c" stroke-width="2" stroke-linecap="butt"/>
<text x="934.34" y="241.8" font-size="10.0" text-anchor="end" fill="#1e1e1e" stroke="#1e1e1e" stroke-width="0.35">11</text>
<text x="953.64" y="247.9" font-size="10.72" text-anchor="start" fill="#1e1e1e" stroke="#1e1e1e" stroke-width="0.35">RB3/CTED2/P2A/CCP2/C12IN2-/AN9</text>
<line x1="919.54" y1="258" x2="946.14" y2="258" stroke="#6e060c" stroke-width="2" stroke-linecap="butt"/>
<text x="934.34" y="255.8" font-size="10.0" text-anchor="end" fill="#1e1e1e" stroke="#1e1e1e" stroke-width="0.35">14</text>
<text x="953.64" y="261.9" font-size="10.72" text-anchor="start" fill="#1e1e1e" stroke="#1e1e1e" stroke-width="0.35">RB4/IOC0/T5G/AN11</text>
<line x1="919.54" y1="271" x2="946.14" y2="271" stroke="#6e060c" stroke-width="2" stroke-linecap="butt"/>
<text x="934.34" y="268.8" font-size="10.0" text-anchor="end" fill="#1e1e1e" stroke="#1e1e1e" stroke-width="0.35">15</text>
<text x="953.64" y="274.9" font-size="10.72" text-anchor="start" fill="#1e1e1e" stroke="#1e1e1e" stroke-width="0.35">RB5/IOC1/P3A/CCP3/T3CKI/T1G/AN13</text>
<line x1="919.54" y1="284" x2="946.14" y2="284" stroke="#6e060c" stroke-width="2" stroke-linecap="butt"/>
<text x="934.34" y="281.8" font-size="10.0" text-anchor="end" fill="#1e1e1e" stroke="#1e1e1e" stroke-width="0.35">16</text>
<text x="953.64" y="287.9" font-size="10.72" text-anchor="start" fill="#1e1e1e" stroke="#1e1e1e" stroke-width="0.35">RB6/IOC2/PGC</text>
<line x1="919.54" y1="297" x2="946.14" y2="297" stroke="#6e060c" stroke-width="2" stroke-linecap="butt"/>
<text x="934.34" y="294.8" font-size="10.0" text-anchor="end" fill="#1e1e1e" stroke="#1e1e1e" stroke-width="0.35">17</text>
<text x="953.64" y="300.9" font-size="10.72" text-anchor="start" fill="#1e1e1e" stroke="#1e1e1e" stroke-width="0.35">RB7/IOC3/PGD</text>
<line x1="1317.2" y1="73" x2="1343.8" y2="73" stroke="#6e060c" stroke-width="2" stroke-linecap="butt"/>
<text x="1330.8" y="70.8" font-size="10.0" text-anchor="start" fill="#1e1e1e" stroke="#1e1e1e" stroke-width="0.35">32</text>
<text x="1310.1" y="76.9" font-size="10.72" text-anchor="end" fill="#1e1e1e" stroke="#1e1e1e" stroke-width="0.35">RC0/P2B/T3CKI/T3G/T1CKI/SOSCO</text>
<line x1="1317.2" y1="86" x2="1343.8" y2="86" stroke="#6e060c" stroke-width="2" stroke-linecap="butt"/>
<text x="1330.8" y="83.8" font-size="10.0" text-anchor="start" fill="#1e1e1e" stroke="#1e1e1e" stroke-width="0.35">35</text>
<text x="1310.1" y="89.9" font-size="10.72" text-anchor="end" fill="#1e1e1e" stroke="#1e1e1e" stroke-width="0.35">RC1/P2A/CCP2/SOSCI</text>
<line x1="1317.2" y1="99" x2="1343.8" y2="99" stroke="#6e060c" stroke-width="2" stroke-linecap="butt"/>
<text x="1330.8" y="96.8" font-size="10.0" text-anchor="start" fill="#1e1e1e" stroke="#1e1e1e" stroke-width="0.35">36</text>
<text x="1310.1" y="102.9" font-size="10.72" text-anchor="end" fill="#1e1e1e" stroke="#1e1e1e" stroke-width="0.35">RC2/CTPLS/P1A/CCP1/T5CKI/AN14</text>
<line x1="1317.2" y1="113" x2="1343.8" y2="113" stroke="#6e060c" stroke-width="2" stroke-linecap="butt"/>
<text x="1330.8" y="110.8" font-size="10.0" text-anchor="start" fill="#1e1e1e" stroke="#1e1e1e" stroke-width="0.35">37</text>
<text x="1310.1" y="116.9" font-size="10.72" text-anchor="end" fill="#1e1e1e" stroke="#1e1e1e" stroke-width="0.35">RC3/SCK1/SCL1/AN15</text>
<line x1="1317.2" y1="126" x2="1343.8" y2="126" stroke="#6e060c" stroke-width="2" stroke-linecap="butt"/>
<text x="1330.8" y="123.8" font-size="10.0" text-anchor="start" fill="#1e1e1e" stroke="#1e1e1e" stroke-width="0.35">42</text>
<text x="1310.1" y="129.9" font-size="10.72" text-anchor="end" fill="#1e1e1e" stroke="#1e1e1e" stroke-width="0.35">RC4/SDI1/SDA1/AN16</text>
<line x1="1317.2" y1="139" x2="1343.8" y2="139" stroke="#6e060c" stroke-width="2" stroke-linecap="butt"/>
<text x="1330.8" y="136.8" font-size="10.0" text-anchor="start" fill="#1e1e1e" stroke="#1e1e1e" stroke-width="0.35">43</text>
<text x="1310.1" y="142.9" font-size="10.72" text-anchor="end" fill="#1e1e1e" stroke="#1e1e1e" stroke-width="0.35">RC5/SDO1/AN17</text>
<line x1="1317.2" y1="152" x2="1343.8" y2="152" stroke="#6e060c" stroke-width="2" stroke-linecap="butt"/>
<text x="1330.8" y="149.8" font-size="10.0" text-anchor="start" fill="#1e1e1e" stroke="#1e1e1e" stroke-width="0.35">44</text>
<text x="1310.1" y="155.9" font-size="10.72" text-anchor="end" fill="#1e1e1e" stroke="#1e1e1e" stroke-width="0.35">RC6/TX1/CK1/AN18</text>
<line x1="1317.2" y1="165" x2="1343.8" y2="165" stroke="#6e060c" stroke-width="2" stroke-linecap="butt"/>
<text x="1330.8" y="162.8" font-size="10.0" text-anchor="start" fill="#1e1e1e" stroke="#1e1e1e" stroke-width="0.35">1</text>
<text x="1310.1" y="168.9" font-size="10.72" text-anchor="end" fill="#1e1e1e" stroke="#1e1e1e" stroke-width="0.35">RC7/RX1/DT1/AN19</text>
<line x1="1317.2" y1="191" x2="1343.8" y2="191" stroke="#6e060c" stroke-width="2" stroke-linecap="butt"/>
<text x="1330.8" y="188.8" font-size="10.0" text-anchor="start" fill="#1e1e1e" stroke="#1e1e1e" stroke-width="0.35">38</text>
<text x="1310.1" y="194.9" font-size="10.72" text-anchor="end" fill="#1e1e1e" stroke="#1e1e1e" stroke-width="0.35">RD0/SCK2/SCL2/AN20</text>
<line x1="1317.2" y1="205" x2="1343.8" y2="205" stroke="#6e060c" stroke-width="2" stroke-linecap="butt"/>
<text x="1330.8" y="202.8" font-size="10.0" text-anchor="start" fill="#1e1e1e" stroke="#1e1e1e" stroke-width="0.35">39</text>
<text x="1310.1" y="208.9" font-size="10.72" text-anchor="end" fill="#1e1e1e" stroke="#1e1e1e" stroke-width="0.35">RD1/CCP4/SDI2/SDA2/AN21</text>
<line x1="1317.2" y1="218" x2="1343.8" y2="218" stroke="#6e060c" stroke-width="2" stroke-linecap="butt"/>
<text x="1330.8" y="215.8" font-size="10.0" text-anchor="start" fill="#1e1e1e" stroke="#1e1e1e" stroke-width="0.35">40</text>
<text x="1310.1" y="221.9" font-size="10.72" text-anchor="end" fill="#1e1e1e" stroke="#1e1e1e" stroke-width="0.35">RD2/P2B/AN22</text>
<line x1="1317.2" y1="231" x2="1343.8" y2="231" stroke="#6e060c" stroke-width="2" stroke-linecap="butt"/>
<text x="1330.8" y="228.8" font-size="10.0" text-anchor="start" fill="#1e1e1e" stroke="#1e1e1e" stroke-width="0.35">41</text>
<text x="1310.1" y="234.9" font-size="10.72" text-anchor="end" fill="#1e1e1e" stroke="#1e1e1e" stroke-width="0.35">RD3/P2C/SS2/AN23</text>
<line x1="1317.2" y1="244" x2="1343.8" y2="244" stroke="#6e060c" stroke-width="2" stroke-linecap="butt"/>
<text x="1330.8" y="241.8" font-size="10.0" text-anchor="start" fill="#1e1e1e" stroke="#1e1e1e" stroke-width="0.35">2</text>
<text x="1310.1" y="247.9" font-size="10.72" text-anchor="end" fill="#1e1e1e" stroke="#1e1e1e" stroke-width="0.35">RD4/P2D/SDO2/AN24</text>
<line x1="1317.2" y1="258" x2="1343.8" y2="258" stroke="#6e060c" stroke-width="2" stroke-linecap="butt"/>
<text x="1330.8" y="255.8" font-size="10.0" text-anchor="start" fill="#1e1e1e" stroke="#1e1e1e" stroke-width="0.35">3</text>
<text x="1310.1" y="261.9" font-size="10.72" text-anchor="end" fill="#1e1e1e" stroke="#1e1e1e" stroke-width="0.35">RD5/P1B/AN25</text>
<line x1="1317.2" y1="271" x2="1343.8" y2="271" stroke="#6e060c" stroke-width="2" stroke-linecap="butt"/>
<text x="1330.8" y="268.8" font-size="10.0" text-anchor="start" fill="#1e1e1e" stroke="#1e1e1e" stroke-width="0.35">4</text>
<text x="1310.1" y="274.9" font-size="10.72" text-anchor="end" fill="#1e1e1e" stroke="#1e1e1e" stroke-width="0.35">RD6/P1C/TX2/CK2/AN26</text>
<line x1="1317.2" y1="284" x2="1343.8" y2="284" stroke="#6e060c" stroke-width="2" stroke-linecap="butt"/>
<text x="1330.8" y="281.8" font-size="10.0" text-anchor="start" fill="#1e1e1e" stroke="#1e1e1e" stroke-width="0.35">5</text>
<text x="1310.1" y="287.9" font-size="10.72" text-anchor="end" fill="#1e1e1e" stroke="#1e1e1e" stroke-width="0.35">RD7/P1D/RX2/DT2/AN27</text>
<line x1="1317.2" y1="324" x2="1343.8" y2="324" stroke="#6e060c" stroke-width="2" stroke-linecap="butt"/>
<text x="1330.8" y="321.8" font-size="10.0" text-anchor="start" fill="#1e1e1e" stroke="#1e1e1e" stroke-width="0.35">25</text>
<text x="1310.1" y="327.9" font-size="10.72" text-anchor="end" fill="#1e1e1e" stroke="#1e1e1e" stroke-width="0.35">RE0/P3A/CCP3/AN5</text>
<line x1="1317.2" y1="337" x2="1343.8" y2="337" stroke="#6e060c" stroke-width="2" stroke-linecap="butt"/>
<text x="1330.8" y="334.8" font-size="10.0" text-anchor="start" fill="#1e1e1e" stroke="#1e1e1e" stroke-width="0.35">26</text>
<text x="1310.1" y="340.9" font-size="10.72" text-anchor="end" fill="#1e1e1e" stroke="#1e1e1e" stroke-width="0.35">RE1/P3B/AN6</text>
<line x1="1317.2" y1="350" x2="1343.8" y2="350" stroke="#6e060c" stroke-width="2" stroke-linecap="butt"/>
<text x="1330.8" y="347.8" font-size="10.0" text-anchor="start" fill="#1e1e1e" stroke="#1e1e1e" stroke-width="0.35">27</text>
<text x="1310.1" y="353.9" font-size="10.72" text-anchor="end" fill="#1e1e1e" stroke="#1e1e1e" stroke-width="0.35">RE2/CCP5/AN7</text>
<line x1="1317.2" y1="363" x2="1343.8" y2="363" stroke="#6e060c" stroke-width="2" stroke-linecap="butt"/>
<text x="1330.8" y="360.8" font-size="10.0" text-anchor="start" fill="#1e1e1e" stroke="#1e1e1e" stroke-width="0.35">18</text>
<text x="1310.1" y="366.9" font-size="10.72" text-anchor="end" fill="#1e1e1e" stroke="#1e1e1e" stroke-width="0.35">MCLR/VPP/RE3</text>
<text x="274.6" y="77" font-size="10.7" text-anchor="start" fill="#7e0e0e" stroke="#7e0e0e" stroke-width="0.35">MASTER</text>
<line x1="43.55" y1="370" x2="116.06" y2="370" stroke="#0a420e" stroke-width="2" stroke-linecap="butt"/>
<polygon points="43.55,365.4 43.55,374.6 30.97,370" fill="#e1e2d2" stroke="#0a420e" stroke-width="1.8"/>
<text x="24.4" y="374.2" font-size="10.72" text-anchor="end" fill="#1e1e1e" stroke="#1e1e1e" stroke-width="0.35">SS</text>
<line x1="538.6" y1="238" x2="624.76" y2="238" stroke="#0a420e" stroke-width="2" stroke-linecap="butt"/>
<polygon points="624.76,233.21 624.76,241.81 637.66,237.51" fill="#e1e2d2" stroke="#0a420e" stroke-width="2" stroke-linejoin="miter"/>
<text x="644.9" y="241.41" font-size="10.72" text-anchor="start" fill="#1e1e1e" stroke="#1e1e1e" stroke-width="0.35">clk</text>
<line x1="538.6" y1="251" x2="626.76" y2="251" stroke="#0a420e" stroke-width="2" stroke-linecap="butt"/>
<polygon points="637.96,246.55 637.96,255.15 625.97,250.85" fill="#e1e2d2" stroke="#0a420e" stroke-width="2" stroke-linejoin="miter"/>
<text x="644.9" y="254.75" font-size="10.72" text-anchor="start" fill="#1e1e1e" stroke="#1e1e1e" stroke-width="0.35">MISO</text>
<line x1="538.6" y1="264" x2="624.76" y2="264" stroke="#0a420e" stroke-width="2" stroke-linecap="butt"/>
<polygon points="624.76,259.89 624.76,268.49 637.66,264.19" fill="#e1e2d2" stroke="#0a420e" stroke-width="2" stroke-linejoin="miter"/>
<text x="644.9" y="268.09" font-size="10.72" text-anchor="start" fill="#1e1e1e" stroke="#1e1e1e" stroke-width="0.35">MOSI</text>
<polyline points="539,278 552,278 552,291 645,291" fill="none" stroke="#0a420e" stroke-width="2" stroke-linejoin="miter" stroke-linecap="square"/>
<rect x="670" y="278" width="159" height="105" fill="#cbcbae" stroke="#7c060c" stroke-width="2"/>
<line x1="644.56" y1="291" x2="669" y2="291" stroke="#6e060c" stroke-width="2" stroke-linecap="butt"/>
<text x="677.2" y="295.38" font-size="10.72" text-anchor="start" fill="#1e1e1e" stroke="#1e1e1e" stroke-width="0.35">RXD</text>
<line x1="644.56" y1="317" x2="669" y2="317" stroke="#6e060c" stroke-width="2" stroke-linecap="butt"/>
<text x="677.2" y="321.5" font-size="10.72" text-anchor="start" fill="#1e1e1e" stroke="#1e1e1e" stroke-width="0.35">TXD</text>
<line x1="644.56" y1="344" x2="669" y2="344" stroke="#6e060c" stroke-width="2" stroke-linecap="butt"/>
<text x="677.2" y="348" font-size="10.72" text-anchor="start" fill="#1e1e1e" stroke="#1e1e1e" stroke-width="0.35">RTS</text>
<line x1="644.56" y1="370" x2="669" y2="370" stroke="#6e060c" stroke-width="2" stroke-linecap="butt"/>
<text x="677.2" y="374.5" font-size="10.72" text-anchor="start" fill="#1e1e1e" stroke="#1e1e1e" stroke-width="0.35">CTS</text>
<rect x="711" y="291.6" width="105.8" height="78.6" fill="#000000" stroke="#6a1212" stroke-width="1.3"/>
<rect x="717.3" y="297.3" width="6.2" height="6.8" fill="#22e022"/>
<text x="733" y="304.2" font-size="8.4" text-anchor="start" fill="#e6e628" stroke="#e6e628" stroke-width="0.12">VT52, VT100, ANSI</text>
<text x="719.4" y="364" font-size="5.85" text-anchor="start" fill="#e6e628" stroke="#e6e628" stroke-width="0.12">Xmodem, Ymodem, Zmodem</text>
<polyline points="539,448 578,448 578,403 651,403 651,528" fill="none" stroke="#0a420e" stroke-width="2" stroke-linejoin="miter" stroke-linecap="square"/>
<polyline points="539,488 619,488 619,448" fill="none" stroke="#0a420e" stroke-width="2" stroke-linejoin="miter" stroke-linecap="square"/>
<polygon points="612.37,447.42 625.17,447.42 618.77,436.48" fill="none" stroke="#0a420e" stroke-width="2" stroke-linejoin="miter"/>
<line x1="619" y1="438.48" x2="619" y2="448.02" stroke="#0a420e" stroke-width="2" stroke-linecap="butt"/>
<line x1="651" y1="528" x2="651" y2="541" stroke="#6e060c" stroke-width="2" stroke-linecap="butt"/>
<line x1="651" y1="568" x2="651" y2="580.6" stroke="#6e060c" stroke-width="2" stroke-linecap="butt"/>
<circle cx="651" cy="554.6" r="14.6" fill="#050505" stroke="#6e0a10" stroke-width="1.6"/>
<path d="M643.8,550.4 L658.2,550.4 L651,560.2 Z M644,560.2 L657.6,560.2 M651,541 L651,568" fill="none" stroke="#961818" stroke-width="1"/>
<text x="675" y="552.2" font-size="15.6" text-anchor="start" fill="#1e1e1e" stroke="#1e1e1e" stroke-width="0.3">D1</text>
<text x="675.2" y="567.7" font-size="10.72" text-anchor="start" fill="#1e1e1e" stroke="#1e1e1e" stroke-width="0.35">LED-GREEN</text>
<polyline points="651,581 651,659 619,659" fill="none" stroke="#0a420e" stroke-width="2" stroke-linejoin="miter" stroke-linecap="square"/>
<line x1="619.67" y1="659" x2="604.87" y2="659" stroke="#6e060c" stroke-width="2" stroke-linecap="butt"/>
<line x1="551.83" y1="659" x2="565.05" y2="659" stroke="#6e060c" stroke-width="2" stroke-linecap="butt"/>
<rect x="565" y="654" width="40" height="11" fill="#cbcbae" stroke="#7c060c" stroke-width="2"/>
<text x="564.8" y="649.8" font-size="15.6" text-anchor="start" fill="#1e1e1e" stroke="#1e1e1e" stroke-width="0.3">R1</text>
<text x="564.6" y="676.8" font-size="10.72" text-anchor="start" fill="#1e1e1e" stroke="#1e1e1e" stroke-width="0.35">200R</text>
<polyline points="552,659 519,659 519,739" fill="none" stroke="#0a420e" stroke-width="2" stroke-linejoin="miter" stroke-linecap="square"/>
<line x1="505.25" y1="739" x2="533.25" y2="739" stroke="#0a420e" stroke-width="2" stroke-linecap="butt"/>
<line x1="511.75" y1="745" x2="526.75" y2="745" stroke="#0a420e" stroke-width="2" stroke-linecap="butt"/>
<line x1="516.75" y1="752" x2="521.75" y2="752" stroke="#0a420e" stroke-width="2" stroke-linecap="butt"/>
<rect x="801.8" y="32.6" width="27.6" height="27.6" fill="#d60808" stroke="#a80a10" stroke-width="1.4"/>
<text x="816.3" y="53.4" font-size="20.5" font-weight="bold" font-family="NanumGothic, &quot;Liberation Sans&quot;, sans-serif" text-anchor="middle" fill="#d8d8d8" stroke="#d8d8d8" stroke-width="0.9" stroke-linejoin="round">1</text>
<line x1="830" y1="46" x2="855.3" y2="46" stroke="#6e060c" stroke-width="2" stroke-linecap="butt"/>
<polyline points="855,46 868,46 868,126 921,126" fill="none" stroke="#0a420e" stroke-width="2" stroke-linejoin="miter" stroke-linecap="square"/>
<line x1="822.45" y1="139" x2="920.85" y2="139" stroke="#0a420e" stroke-width="2" stroke-linecap="butt"/>
<polygon points="809.17,134.73 809.17,143.33 822.45,139.03" fill="#e1e2d2" stroke="#0a420e" stroke-width="2" stroke-linejoin="miter"/>
<text x="802.4" y="142.93" font-size="10.72" text-anchor="end" fill="#1e1e1e" stroke="#1e1e1e" stroke-width="0.35">SS</text>
<line x1="1343.29" y1="113" x2="1377.86" y2="113" stroke="#0a420e" stroke-width="2" stroke-linecap="butt"/>
<polygon points="1389.06,108.27 1389.06,116.87 1377.06,112.57" fill="#e1e2d2" stroke="#0a420e" stroke-width="2" stroke-linejoin="miter"/>
<text x="1396.8" y="116.47" font-size="10.72" text-anchor="start" fill="#1e1e1e" stroke="#1e1e1e" stroke-width="0.35">clk</text>
<line x1="1343.29" y1="126" x2="1377.86" y2="126" stroke="#0a420e" stroke-width="2" stroke-linecap="butt"/>
<polygon points="1389.06,121.5 1389.06,130.1 1377.06,125.8" fill="#e1e2d2" stroke="#0a420e" stroke-width="2" stroke-linejoin="miter"/>
<text x="1396.8" y="129.7" font-size="10.72" text-anchor="start" fill="#1e1e1e" stroke="#1e1e1e" stroke-width="0.35">MOSI</text>
<line x1="1343.29" y1="139" x2="1375.86" y2="139" stroke="#0a420e" stroke-width="2" stroke-linecap="butt"/>
<polygon points="1375.86,134.73 1375.86,143.33 1388.76,139.03" fill="#e1e2d2" stroke="#0a420e" stroke-width="2" stroke-linejoin="miter"/>
<text x="1396.8" y="142.93" font-size="10.72" text-anchor="start" fill="#1e1e1e" stroke="#1e1e1e" stroke-width="0.35">MISO</text>
<polyline points="1343,231 1423,231 1423,468 1336,468 1336,481" fill="none" stroke="#0a420e" stroke-width="2" stroke-linejoin="miter" stroke-linecap="square"/>
<line x1="1382" y1="230.84" x2="1382" y2="270.86" stroke="#0a420e" stroke-width="2" stroke-linecap="butt"/>
<rect x="1379.78" y="228.24" width="5.2" height="5.2" fill="#0a420e"/>
<line x1="1382" y1="270.86" x2="1382" y2="284.21" stroke="#6e060c" stroke-width="2" stroke-linecap="butt"/>
<line x1="1382" y1="323.63" x2="1382" y2="336.88" stroke="#6e060c" stroke-width="2" stroke-linecap="butt"/>
<rect x="1377" y="284" width="11" height="40" fill="#cbcbae" stroke="#7c060c" stroke-width="2"/>
<text x="1396.3" y="298.41" font-size="15.6" text-anchor="start" fill="#1e1e1e" stroke="#1e1e1e" stroke-width="0.3">R2</text>
<text x="1396.3" y="313.81" font-size="10.72" text-anchor="start" fill="#1e1e1e" stroke="#1e1e1e" stroke-width="0.35">10k</text>
<polyline points="1382,337 1382,363 1343,363" fill="none" stroke="#0a420e" stroke-width="2" stroke-linejoin="miter" stroke-linecap="square"/>
<rect x="1347.21" y="360.77" width="5.2" height="5.2" fill="#0a420e"/>
<polyline points="1350,363 1350,383 1343,383 1343,422 1356,422 1356,403" fill="none" stroke="#0a420e" stroke-width="2" stroke-linejoin="miter" stroke-linecap="square"/>
<polygon points="1350.22,402.8 1363.02,402.8 1356.62,390.6" fill="none" stroke="#0a420e" stroke-width="2" stroke-linejoin="miter"/>
<line x1="1357" y1="392.6" x2="1357" y2="403" stroke="#0a420e" stroke-width="2" stroke-linecap="butt"/>
<line x1="1336" y1="481.32" x2="1336" y2="499" stroke="#6e060c" stroke-width="2" stroke-linecap="butt"/>
<line x1="1336" y1="500.6" x2="1323" y2="525.2" stroke="#6e060c" stroke-width="2.2" stroke-linecap="butt"/>
<line x1="1323" y1="527" x2="1323" y2="548.11" stroke="#6e060c" stroke-width="2" stroke-linecap="butt"/>
<line x1="1350" y1="527" x2="1350" y2="548.11" stroke="#6e060c" stroke-width="2" stroke-linecap="butt"/>
<rect x="1334.4" y="498.8" width="3.2" height="3.2" fill="#e1e2d2" stroke="#6e060c" stroke-width="1.8"/>
<rect x="1321.4" y="523.8" width="3.2" height="3.2" fill="#e1e2d2" stroke="#6e060c" stroke-width="1.8"/>
<rect x="1348.4" y="523.8" width="3.2" height="3.2" fill="#e1e2d2" stroke="#6e060c" stroke-width="1.8"/>
<circle cx="1330.6" cy="537.3" r="5.3" fill="#c80606" stroke="#a00808" stroke-width="0.8"/>
<path d="M1327.6,537.3 L1333.6,537.3 M1330.3,535 L1327.6,537.3 L1330.3,539.6" fill="none" stroke="#5c0404" stroke-width="1.7"/>
<circle cx="1343.1" cy="537.3" r="5.3" fill="#c80606" stroke="#a00808" stroke-width="0.8"/>
<path d="M1340.1,537.3 L1346.1,537.3 M1343.3999999999999,535 L1346.1,537.3 L1343.3999999999999,539.6" fill="none" stroke="#5c0404" stroke-width="1.7"/>
<text x="1361.4" y="507.4" font-size="15.6" text-anchor="start" fill="#1e1e1e" stroke="#1e1e1e" stroke-width="0.3">SW1</text>
<text x="1361.4" y="523.9" font-size="10.72" text-anchor="start" fill="#1e1e1e" stroke="#1e1e1e" stroke-width="0.35">SW-SPDT</text>
<polyline points="1323,548 1323,574 1277,574 1277,580" fill="none" stroke="#0a420e" stroke-width="2" stroke-linejoin="miter" stroke-linecap="square"/>
<polyline points="1350,548 1350,574 1376,574 1376,580" fill="none" stroke="#0a420e" stroke-width="2" stroke-linejoin="miter" stroke-linecap="square"/>
<line x1="1277" y1="580.21" x2="1277" y2="593.3" stroke="#6e060c" stroke-width="2" stroke-linecap="butt"/>
<line x1="1277" y1="633.24" x2="1277" y2="646.43" stroke="#6e060c" stroke-width="2" stroke-linecap="butt"/>
<rect x="1272" y="593" width="10" height="40" fill="#cbcbae" stroke="#7c060c" stroke-width="2"/>
<text x="1291.2" y="607.5" font-size="15.6" text-anchor="start" fill="#1e1e1e" stroke="#1e1e1e" stroke-width="0.3">R3</text>
<text x="1291.2" y="622.9" font-size="10.72" text-anchor="start" fill="#1e1e1e" stroke="#1e1e1e" stroke-width="0.35">2k2</text>
<line x1="1376" y1="580.21" x2="1376" y2="593.3" stroke="#6e060c" stroke-width="2" stroke-linecap="butt"/>
<line x1="1376" y1="633.24" x2="1376" y2="646.43" stroke="#6e060c" stroke-width="2" stroke-linecap="butt"/>
<rect x="1371" y="593" width="10" height="40" fill="#cbcbae" stroke="#7c060c" stroke-width="2"/>
<text x="1390.4" y="607.5" font-size="15.6" text-anchor="start" fill="#1e1e1e" stroke="#1e1e1e" stroke-width="0.3">R4</text>
<text x="1390.4" y="622.9" font-size="10.72" text-anchor="start" fill="#1e1e1e" stroke="#1e1e1e" stroke-width="0.35">470R</text>
<line x1="1277" y1="646.43" x2="1277" y2="673" stroke="#0a420e" stroke-width="2" stroke-linecap="butt"/>
<line x1="1376" y1="646.43" x2="1376" y2="673" stroke="#0a420e" stroke-width="2" stroke-linecap="butt"/>
<line x1="1262.73" y1="673" x2="1290.73" y2="673" stroke="#0a420e" stroke-width="2" stroke-linecap="butt"/>
<line x1="1269.23" y1="679" x2="1284.23" y2="679" stroke="#0a420e" stroke-width="2" stroke-linecap="butt"/>
<line x1="1274.23" y1="686" x2="1279.23" y2="686" stroke="#0a420e" stroke-width="2" stroke-linecap="butt"/>
<line x1="1361.86" y1="673" x2="1389.86" y2="673" stroke="#0a420e" stroke-width="2" stroke-linecap="butt"/>
<line x1="1368.36" y1="679" x2="1383.36" y2="679" stroke="#0a420e" stroke-width="2" stroke-linecap="butt"/>
<line x1="1373.36" y1="686" x2="1378.36" y2="686" stroke="#0a420e" stroke-width="2" stroke-linecap="butt"/>
<rect x="934" y="428" width="132" height="79" fill="#cbcbae" stroke="#7c060c" stroke-width="2"/>
<rect x="980" y="440" width="78" height="48" fill="#ffffff" stroke="#0a0a8c" stroke-width="2"/>
<text x="1018.6" y="477.8" font-size="37.4" text-anchor="middle" fill="#1010a8" stroke="#1010a8" stroke-width="0.3" font-weight="bold">SPI</text>
<line x1="907.74" y1="442" x2="932.98" y2="442" stroke="#6e060c" stroke-width="2" stroke-linecap="butt"/>
<text x="940.98" y="445.93" font-size="10.72" text-anchor="start" fill="#1e1e1e" stroke="#1e1e1e" stroke-width="0.35">DIN</text>
<line x1="907.74" y1="455" x2="932.98" y2="455" stroke="#6e060c" stroke-width="2" stroke-linecap="butt"/>
<text x="940.98" y="458.58" font-size="10.72" text-anchor="start" fill="#1e1e1e" stroke="#1e1e1e" stroke-width="0.35">DOUT</text>
<line x1="907.74" y1="468" x2="932.98" y2="468" stroke="#6e060c" stroke-width="2" stroke-linecap="butt"/>
<text x="940.98" y="471.9" font-size="10.72" text-anchor="start" fill="#1e1e1e" stroke="#1e1e1e" stroke-width="0.35">SCK</text>
<line x1="907.74" y1="481" x2="932.98" y2="481" stroke="#6e060c" stroke-width="2" stroke-linecap="butt"/>
<text x="940.98" y="485.22" font-size="10.72" text-anchor="start" fill="#1e1e1e" stroke="#1e1e1e" stroke-width="0.35">SS</text>
<line x1="907.74" y1="494" x2="932.98" y2="494" stroke="#6e060c" stroke-width="2" stroke-linecap="butt"/>
<text x="940.98" y="497.58" font-size="10.72" text-anchor="start" fill="#1e1e1e" stroke="#1e1e1e" stroke-width="0.35">TRIG</text>
<polygon points="749.91,437.73 749.91,446.33 763.57,442.03" fill="#e1e2d2" stroke="#0a420e" stroke-width="2" stroke-linejoin="miter"/>
<text x="743.4" y="445.93" font-size="10.72" text-anchor="end" fill="#1e1e1e" stroke="#1e1e1e" stroke-width="0.35">MISO</text>
<line x1="763.57" y1="442" x2="907.74" y2="442" stroke="#0a420e" stroke-width="2" stroke-linecap="butt"/>
<polygon points="749.91,450.38 749.91,458.98 763.57,454.68" fill="#e1e2d2" stroke="#0a420e" stroke-width="2" stroke-linejoin="miter"/>
<text x="743.4" y="458.58" font-size="10.72" text-anchor="end" fill="#1e1e1e" stroke="#1e1e1e" stroke-width="0.35">MOSI</text>
<line x1="763.57" y1="455" x2="907.74" y2="455" stroke="#0a420e" stroke-width="2" stroke-linecap="butt"/>
<polygon points="749.91,463.7 749.91,472.3 763.57,468" fill="#e1e2d2" stroke="#0a420e" stroke-width="2" stroke-linejoin="miter"/>
<text x="743.4" y="471.9" font-size="10.72" text-anchor="end" fill="#1e1e1e" stroke="#1e1e1e" stroke-width="0.35">clk</text>
<line x1="763.57" y1="468" x2="907.74" y2="468" stroke="#0a420e" stroke-width="2" stroke-linecap="butt"/>
<polygon points="835.64,477.02 835.64,485.62 849.35,481.32" fill="#e1e2d2" stroke="#0a420e" stroke-width="2" stroke-linejoin="miter"/>
<text x="829.6" y="485.22" font-size="10.72" text-anchor="end" fill="#1e1e1e" stroke="#1e1e1e" stroke-width="0.35">SS</text>
<line x1="849.35" y1="481" x2="907.74" y2="481" stroke="#0a420e" stroke-width="2" stroke-linecap="butt"/>
<rect x="934" y="547" width="118" height="106" fill="#cbcbae" stroke="#7c060c" stroke-width="2"/>
<line x1="907.74" y1="560" x2="932.98" y2="560" stroke="#6e060c" stroke-width="2" stroke-linecap="butt"/>
<text x="940.98" y="564.17" font-size="10.72" text-anchor="start" fill="#1e1e1e" stroke="#1e1e1e" stroke-width="0.35">A</text>
<polyline points="874,481 874,560 908,560" fill="none" stroke="#0a420e" stroke-width="2" stroke-linejoin="miter" stroke-linecap="square"/>
<rect x="871.4" y="478.4" width="5.2" height="5.2" fill="#0a420e"/>
<line x1="907.74" y1="587" x2="932.98" y2="587" stroke="#6e060c" stroke-width="2" stroke-linecap="butt"/>
<text x="940.98" y="590.48" font-size="10.72" text-anchor="start" fill="#1e1e1e" stroke="#1e1e1e" stroke-width="0.35">B</text>
<polyline points="809,468 809,587 908,587" fill="none" stroke="#0a420e" stroke-width="2" stroke-linejoin="miter" stroke-linecap="square"/>
<rect x="806.4" y="465.4" width="5.2" height="5.2" fill="#0a420e"/>
<line x1="907.74" y1="613" x2="932.98" y2="613" stroke="#6e060c" stroke-width="2" stroke-linecap="butt"/>
<text x="940.98" y="616.56" font-size="10.72" text-anchor="start" fill="#1e1e1e" stroke="#1e1e1e" stroke-width="0.35">C</text>
<polyline points="802,455 802,613 908,613" fill="none" stroke="#0a420e" stroke-width="2" stroke-linejoin="miter" stroke-linecap="square"/>
<rect x="799.4" y="452.4" width="5.2" height="5.2" fill="#0a420e"/>
<line x1="907.74" y1="640" x2="932.98" y2="640" stroke="#6e060c" stroke-width="2" stroke-linecap="butt"/>
<text x="940.98" y="643.73" font-size="10.72" text-anchor="start" fill="#1e1e1e" stroke="#1e1e1e" stroke-width="0.35">D</text>
<polyline points="796,442 796,640 908,640" fill="none" stroke="#0a420e" stroke-width="2" stroke-linejoin="miter" stroke-linecap="square"/>
<rect x="793.4" y="439.4" width="5.2" height="5.2" fill="#0a420e"/>
<rect x="967" y="567" width="73" height="66.8" fill="#0c3c0c"/>
<path d="M967,567 V633.8 M973.64,567 V633.8 M980.27,567 V633.8 M986.91,567 V633.8 M993.55,567 V633.8 M1000.18,567 V633.8 M1006.82,567 V633.8 M1013.45,567 V633.8 M1020.09,567 V633.8 M1026.73,567 V633.8 M1033.36,567 V633.8 M1040,567 V633.8 M967,567 H1040 M967,573.68 H1040 M967,580.36 H1040 M967,587.04 H1040 M967,593.72 H1040 M967,600.4 H1040 M967,607.08 H1040 M967,613.76 H1040 M967,620.44 H1040 M967,627.12 H1040 M967,633.8 H1040" stroke="#000" stroke-width="1" fill="none"/>
<polyline points="967,579.8 972.9,579.8 972.9,572.1 979.7,572.1 979.7,579.8 985.9,579.8 985.9,572.1 992.6,572.1 992.6,579.8 999.7,579.8 999.7,572.1 1006.2,572.1 1006.2,579.8 1012.8,579.8 1012.8,572.1 1019.5,572.1 1019.5,579.8 1026.3,579.8 1026.3,572.1 1033,572.1 1033,579.8 1040,579.8" fill="none" stroke="#f6f63a" stroke-width="2" stroke-linejoin="round"/>
<polyline points="967,593.8 967.46,594.37 967.91,594.93 968.37,595.5 968.83,595.73 969.28,595.17 969.74,594.6 970.19,594.03 970.65,593.46 971.11,592.9 971.56,592.33 972.02,591.76 972.48,591.2 972.93,590.63 973.39,590.06 973.84,589.49 974.3,589.67 974.76,590.24 975.21,590.81 975.67,591.37 976.12,591.94 976.58,592.51 977.04,593.08 977.49,593.64 977.95,594.21 978.41,594.78 978.86,595.34 979.32,595.89 979.77,595.32 980.23,594.75 980.69,594.19 981.14,593.62 981.6,593.05 982.06,592.49 982.51,591.92 982.97,591.35 983.42,590.79 983.88,590.22 984.34,589.65 984.79,589.52 985.25,590.08 985.71,590.65 986.16,591.22 986.62,591.78 987.08,592.35 987.53,592.92 987.99,593.49 988.44,594.05 988.9,594.62 989.36,595.19 989.81,595.75 990.27,595.48 990.73,594.91 991.18,594.34 991.64,593.78 992.09,593.21 992.55,592.64 993.01,592.08 993.46,591.51 993.92,590.94 994.38,590.38 994.83,589.81 995.29,589.36 995.74,589.93 996.2,590.49 996.66,591.06 997.11,591.63 997.57,592.19 998.02,592.76 998.48,593.33 998.94,593.9 999.39,594.46 999.85,595.03 1000.31,595.6 1000.76,595.64 1001.22,595.07 1001.67,594.5 1002.13,593.93 1002.59,593.37 1003.04,592.8 1003.5,592.23 1003.96,591.67 1004.41,591.1 1004.87,590.53 1005.33,589.96 1005.78,589.4 1006.24,589.77 1006.69,590.34 1007.15,590.9 1007.61,591.47 1008.06,592.04 1008.52,592.6 1008.98,593.17 1009.43,593.74 1009.89,594.31 1010.34,594.87 1010.8,595.44 1011.26,595.79 1011.71,595.23 1012.17,594.66 1012.62,594.09 1013.08,593.52 1013.54,592.96 1013.99,592.39 1014.45,591.82 1014.91,591.26 1015.36,590.69 1015.82,590.12 1016.27,589.55 1016.73,589.61 1017.19,590.18 1017.64,590.75 1018.1,591.31 1018.56,591.88 1019.01,592.45 1019.47,593.01 1019.92,593.58 1020.38,594.15 1020.84,594.72 1021.29,595.28 1021.75,595.85 1022.21,595.38 1022.66,594.82 1023.12,594.25 1023.58,593.68 1024.03,593.11 1024.49,592.55 1024.94,591.98 1025.4,591.41 1025.86,590.85 1026.31,590.28 1026.77,589.71 1027.22,589.46 1027.68,590.02 1028.14,590.59 1028.59,591.16 1029.05,591.72 1029.51,592.29 1029.96,592.86 1030.42,593.43 1030.88,593.99 1031.33,594.56 1031.79,595.13 1032.24,595.69 1032.7,595.54 1033.16,594.97 1033.61,594.41 1034.07,593.84 1034.53,593.27 1034.98,592.7 1035.44,592.14 1035.89,591.57 1036.35,591 1036.81,590.44 1037.26,589.87 1037.72,589.3 1038.17,589.87 1038.63,590.43 1039.09,591 1039.54,591.57 1040,592.13" fill="none" stroke="#1212ee" stroke-width="2.6" stroke-linejoin="round"/>
<polyline points="967,612.9 972.9,612.9 972.9,605.1 979.7,605.1 979.7,612.9 985.9,612.9 985.9,605.1 992.6,605.1 992.6,612.9 999.7,612.9 999.7,605.1 1006.2,605.1 1006.2,612.9 1012.8,612.9 1012.8,605.1 1019.5,605.1 1019.5,612.9 1026.3,612.9 1026.3,605.1 1033,605.1 1033,612.9 1040,612.9" fill="none" stroke="#f01212" stroke-width="2" stroke-linejoin="round"/>
<polyline points="967,624.55 967.46,624.04 967.91,623.5 968.37,622.98 968.83,622.51 969.28,622.12 969.74,621.85 970.19,621.71 970.65,621.72 971.11,621.87 971.56,622.15 972.02,622.55 972.48,623.03 972.93,623.55 973.39,624.09 973.84,624.6 974.3,625.04 974.76,625.39 975.21,625.61 975.67,625.7 976.12,625.64 976.58,625.44 977.04,625.11 977.49,624.69 977.95,624.19 978.41,623.65 978.86,623.12 979.32,622.63 979.77,622.22 980.23,621.91 980.69,621.74 981.14,621.71 981.6,621.82 982.06,622.06 982.51,622.43 982.97,622.89 983.42,623.41 983.88,623.94 984.34,624.46 984.79,624.93 985.25,625.31 985.71,625.57 986.16,625.69 986.62,625.67 987.08,625.51 987.53,625.22 987.99,624.81 988.44,624.33 988.9,623.8 989.36,623.26 989.81,622.76 990.27,622.32 990.73,621.99 991.18,621.77 991.64,621.7 992.09,621.77 992.55,621.98 993.01,622.32 993.46,622.75 993.92,623.26 994.38,623.79 994.83,624.32 995.29,624.81 995.74,625.21 996.2,625.51 996.66,625.67 997.11,625.69 997.57,625.57 998.02,625.31 998.48,624.93 998.94,624.47 999.39,623.95 999.85,623.41 1000.31,622.89 1000.76,622.43 1001.22,622.07 1001.67,621.82 1002.13,621.71 1002.59,621.74 1003.04,621.91 1003.5,622.21 1003.96,622.63 1004.41,623.11 1004.87,623.65 1005.33,624.18 1005.78,624.68 1006.24,625.11 1006.69,625.44 1007.15,625.64 1007.61,625.7 1008.06,625.62 1008.52,625.39 1008.98,625.05 1009.43,624.61 1009.89,624.1 1010.34,623.56 1010.8,623.03 1011.26,622.55 1011.71,622.16 1012.17,621.87 1012.62,621.72 1013.08,621.71 1013.54,621.85 1013.99,622.12 1014.45,622.5 1014.91,622.97 1015.36,623.5 1015.82,624.03 1016.27,624.55 1016.73,625 1017.19,625.36 1017.64,625.6 1018.1,625.7 1018.56,625.65 1019.01,625.47 1019.47,625.15 1019.92,624.74 1020.38,624.24 1020.84,623.71 1021.29,623.18 1021.75,622.68 1022.21,622.26 1022.66,621.94 1023.12,621.75 1023.58,621.7 1024.03,621.8 1024.49,622.03 1024.94,622.39 1025.4,622.84 1025.86,623.35 1026.31,623.89 1026.77,624.41 1027.22,624.88 1027.68,625.27 1028.14,625.54 1028.59,625.68 1029.05,625.68 1029.51,625.53 1029.96,625.25 1030.42,624.86 1030.88,624.38 1031.33,623.86 1031.79,623.32 1032.24,622.81 1032.7,622.37 1033.16,622.02 1033.61,621.79 1034.07,621.7 1034.53,621.76 1034.98,621.95 1035.44,622.28 1035.89,622.7 1036.35,623.2 1036.81,623.74 1037.26,624.27 1037.72,624.76 1038.17,625.17 1038.63,625.48 1039.09,625.66 1039.54,625.7 1040,625.59" fill="none" stroke="#2eea3c" stroke-width="2.0" stroke-linejoin="round"/>
<g stroke="#1818a0" stroke-width="1" fill="none"><circle cx="927.4" cy="409.5" r="3.6"/><path d="M920.4,409.5 H934.4 M927.4,402.5 V416.5"/></g>
<line x1="246.43" y1="258.7" x2="266.69" y2="258.7" stroke="#1e1e1e" stroke-width="1" stroke-linecap="butt"/>
<line x1="455.26" y1="351.7" x2="475.52" y2="351.7" stroke="#1e1e1e" stroke-width="1" stroke-linecap="butt"/>
<line x1="426.68" y1="482.7" x2="457.05" y2="482.7" stroke="#1e1e1e" stroke-width="1" stroke-linecap="butt"/>
<line x1="1050.72" y1="133.7" x2="1070.98" y2="133.7" stroke="#1e1e1e" stroke-width="1" stroke-linecap="butt"/>
<line x1="1260.05" y1="225.7" x2="1280.31" y2="225.7" stroke="#1e1e1e" stroke-width="1" stroke-linecap="butt"/>
<line x1="1231.48" y1="357.7" x2="1261.85" y2="357.7" stroke="#1e1e1e" stroke-width="1" stroke-linecap="butt"/>
<line x1="940.98" y1="476.02" x2="955.28" y2="476.02" stroke="#1e1e1e" stroke-width="1" stroke-linecap="butt"/></svg>
</body></html>
